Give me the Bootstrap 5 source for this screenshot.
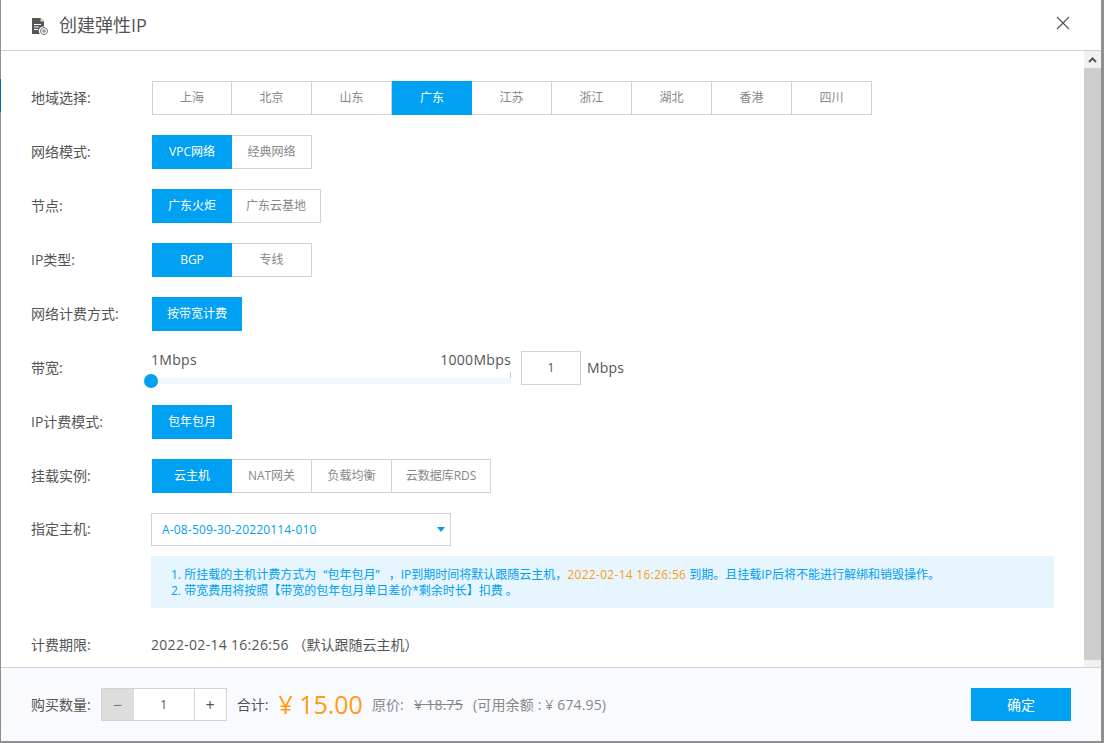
<!DOCTYPE html>
<html lang="zh">
<head>
<meta charset="utf-8">
<title>创建弹性IP</title>
<link rel="stylesheet" href="https://cdn.jsdelivr.net/npm/bootstrap@5.3.0/dist/css/bootstrap.min.css">
<style>
html,body{height:100%;margin:0;overflow:hidden;background:#fff}
body{font-family:"Open Sans","Noto Sans CJK SC",sans-serif;font-size:14px;color:#555;padding:0 3px 2px 0;background:#8f8f8f}
.ltn{letter-spacing:.3px}
.ltn-s{letter-spacing:.17px}
.q-l{padding-left:4px}
.q-r{padding-right:6px}
.dlg{height:741px;background:#fff;border-left:1px solid #8f8f8f;position:relative}
.edge-mark{position:absolute;left:-1px;top:79px;width:1px;height:33px;background:#006e9e}
.dlg-head{height:51px;border-bottom:1px solid #d2d2d2;padding:2px 30px 0}
.dlg-title{font-size:18px;color:#555;margin-left:11px;font-weight:400}
.x-btn{margin-right:1px;margin-top:-6px}
.dlg-mid{height:616px}
.dlg-body{padding:30px 0 0 30px;overflow:hidden}
.scroll-rail{width:17px;background:#f1f1f1}
.scroll-up{height:17px}
.scroll-thumb{background:#cdcdcd;height:592px}
.form-line{height:34px;margin-bottom:20px}
.form-lbl{width:120px;flex:none;color:#555;font-size:14px}
.form-line .form-lbl,.pick-line .form-lbl{padding-bottom:2px}
.seg{display:flex}
.seg-btn{height:34px;width:81px;border:1px solid #d2d2d2;margin-left:-1px;display:flex;align-items:center;justify-content:center;font-size:12px;color:#888;background:#fff}
.seg-btn:first-child{margin-left:0;width:80px}
.seg-btn.on{background:#00a0f2;border-color:#00a0f2;color:#fff;position:relative}
.seg-btn.on:not(:first-child){margin-left:0;width:80px}
.seg-btn.seg-wide{width:90px}
.seg-btn.seg-wide-2{width:100px}
.seg-first{margin-left:1px}
.sl{width:360px;position:relative;height:44px;margin-top:-10px}
.sl-scale{font-size:14px;color:#555;line-height:20px;padding-top:9px;letter-spacing:.3px}
.sl-track{position:absolute;left:0;right:0;top:37px;height:6px;background:#eef9ff}
.sl-knob{position:absolute;left:-7px;top:-4px;width:14px;height:14px;border-radius:50%;background:#00a0f2}
.sl-tick{position:absolute;right:0;top:-6px;width:1px;height:6px;background:#c8c8c8}
.sl-input{width:60px;height:34px;border:1px solid #d2d2d2;font-size:12px;color:#555;margin-left:10px}
.sl-unit{margin-left:6px;font-size:14px;color:#555;letter-spacing:.2px;margin-bottom:2px}
.pick{width:300px;height:33px;border:1px solid #d2d2d2;color:#00a0f2;font-size:12px;padding:0 5px 0 10px}
.caret-d{width:0;height:0;border-left:4px solid transparent;border-right:4px solid transparent;border-top:5px solid #00a0f2}
.tipbox{width:903px;height:52px;background:#e6f5fe;color:#00a0f2;font-size:12px;line-height:16px;padding:11px 20px 0;margin:10px 0 26px 120px}
.tip-o{color:#ff9c0f}
.dlg-foot{height:74px;border-top:1px solid #d2d2d2;background:#f9faff;padding:0 30px}
.qty{height:33px;border:1px solid #d2d2d2;margin-left:10px;background:#fff}
.qty-m{width:32px;background:#ddd;color:#777;font-size:16px;line-height:1}
.qty-v{width:61px;font-size:12px;color:#555;border-right:1px solid #d2d2d2}
.qty-p{width:31px;font-size:16px;color:#555;line-height:1}
.sum-lbl{margin-left:10px}
.sum-val{font-size:25px;color:#ff9c0f;margin-left:10px;line-height:1}
.sum-old{color:#888;margin-left:9px;font-size:14px}
.sum-old s{margin-left:7px;letter-spacing:.2px}
.sum-avail{color:#888;margin-left:10px;font-size:14px;letter-spacing:.15px}
.ok-btn{width:100px;height:33px;background:#00a0f2;color:#fff;font-size:14px;border:0;border-radius:0;padding:0}
.ok-btn:hover{background:#00a0f2;color:#fff}
</style>
</head>
<body>
<div class="dlg d-flex flex-column">
  <span class="edge-mark"></span>
  <div class="dlg-head d-flex align-items-center justify-content-between">
    <div class="d-flex align-items-center">
      <svg width="17" height="17" viewBox="0 0 17 17"><path d="M1 0h8l4 4v4.5a4.5 4.5 0 0 0-4 7.5H1z" fill="#555"/><path d="M9.3 0v3.7H13z" fill="#fff" stroke="#555" stroke-width=".6"/><path d="M3 6.5h7M3 9h5M3 11.5h4" stroke="#fff" stroke-width="1"/><circle cx="13" cy="13" r="3.5" fill="#fff" stroke="#678" stroke-width="1"/><path d="M11 13h4M13 11v4" stroke="#678" stroke-width="1"/></svg>
      <h5 class="dlg-title mb-0">创建弹性IP</h5>
    </div>
    <svg class="x-btn" width="14" height="14" viewBox="0 0 14 14"><path d="M1 1l12 12M13 1L1 13" stroke="#555" stroke-width="1.2" fill="none"/></svg>
  </div>
  <div class="dlg-mid d-flex">
    <div class="dlg-body flex-grow-1">
      <div class="form-line d-flex align-items-center"><div class="form-lbl">地域选择:</div><div class="seg seg-first"><div class="seg-btn">上海</div><div class="seg-btn">北京</div><div class="seg-btn">山东</div><div class="seg-btn on">广东</div><div class="seg-btn">江苏</div><div class="seg-btn">浙江</div><div class="seg-btn">湖北</div><div class="seg-btn">香港</div><div class="seg-btn">四川</div></div></div>
      <div class="form-line d-flex align-items-center"><div class="form-lbl">网络模式:</div><div class="seg seg-first"><div class="seg-btn on">VPC网络</div><div class="seg-btn">经典网络</div></div></div>
      <div class="form-line d-flex align-items-center"><div class="form-lbl">节点:</div><div class="seg seg-first"><div class="seg-btn on">广东火炬</div><div class="seg-btn seg-wide">广东云基地</div></div></div>
      <div class="form-line d-flex align-items-center"><div class="form-lbl">IP类型:</div><div class="seg seg-first"><div class="seg-btn on">BGP</div><div class="seg-btn">专线</div></div></div>
      <div class="form-line d-flex align-items-center"><div class="form-lbl">网络计费方式:</div><div class="seg seg-first"><div class="seg-btn on seg-wide">按带宽计费</div></div></div>
      <div class="form-line d-flex align-items-center"><div class="form-lbl">带宽:</div>
        <div class="sl"><div class="sl-scale d-flex justify-content-between"><span>1Mbps</span><span>1000Mbps</span></div><div class="sl-track"><span class="sl-knob"></span><span class="sl-tick"></span></div></div>
        <div class="sl-input d-flex align-items-center justify-content-center">1</div><span class="sl-unit">Mbps</span>
      </div>
      <div class="form-line d-flex align-items-center"><div class="form-lbl">IP计费模式:</div><div class="seg seg-first"><div class="seg-btn on">包年包月</div></div></div>
      <div class="form-line d-flex align-items-center"><div class="form-lbl">挂载实例:</div><div class="seg seg-first"><div class="seg-btn on">云主机</div><div class="seg-btn">NAT网关</div><div class="seg-btn">负载均衡</div><div class="seg-btn seg-wide-2">云数据库RDS</div></div></div>
      <div class="pick-line d-flex align-items-center"><div class="form-lbl">指定主机:</div><div class="pick d-flex align-items-center justify-content-between"><span class="ltn-s">A-08-509-30-20220114-010</span><span class="caret-d"></span></div></div>
      <div class="tipbox">1. 所挂载的主机计费方式为 <span class="q-l">“</span>包年包月<span class="q-r">”</span> ，IP到期时间将默认跟随云主机，<span class="tip-o ltn">2022-02-14 16:26:56</span> 到期。且挂载IP后将不能进行解绑和销毁操作。<br>2. 带宽费用将按照【带宽的包年包月单日差价*剩余时长】扣费 。</div>
      <div class="d-flex align-items-center"><div class="form-lbl">计费期限:</div><span class="ltn">2022-02-14 16:26:56</span><span>&nbsp;（默认跟随云主机）</span></div>
    </div>
    <div class="scroll-rail d-flex flex-column">
      <div class="scroll-up d-flex align-items-center justify-content-center"><svg width="9" height="6" viewBox="0 0 9 6"><path d="M1 5l3.5-3.5L8 5" stroke="#555" stroke-width="2" fill="none"/></svg></div>
      <div class="scroll-thumb"></div>
    </div>
  </div>
  <div class="dlg-foot d-flex align-items-center justify-content-between">
    <div class="d-flex align-items-center">
      <span>购买数量:</span>
      <div class="qty d-flex"><div class="qty-m d-flex align-items-center justify-content-center">−</div><div class="qty-v d-flex align-items-center justify-content-center">1</div><div class="qty-p d-flex align-items-center justify-content-center">+</div></div>
      <span class="sum-lbl">合计:</span><span class="sum-val">¥ 15.00</span>
      <span class="sum-old">原价: <s>¥ 18.75</s></span><span class="sum-avail">(可用余额 : ¥ 674.95)</span>
    </div>
    <button type="button" class="btn ok-btn">确定</button>
  </div>
</div>
<script src="https://cdn.jsdelivr.net/npm/bootstrap@5.3.0/dist/js/bootstrap.bundle.min.js"></script>
</body>
</html>
